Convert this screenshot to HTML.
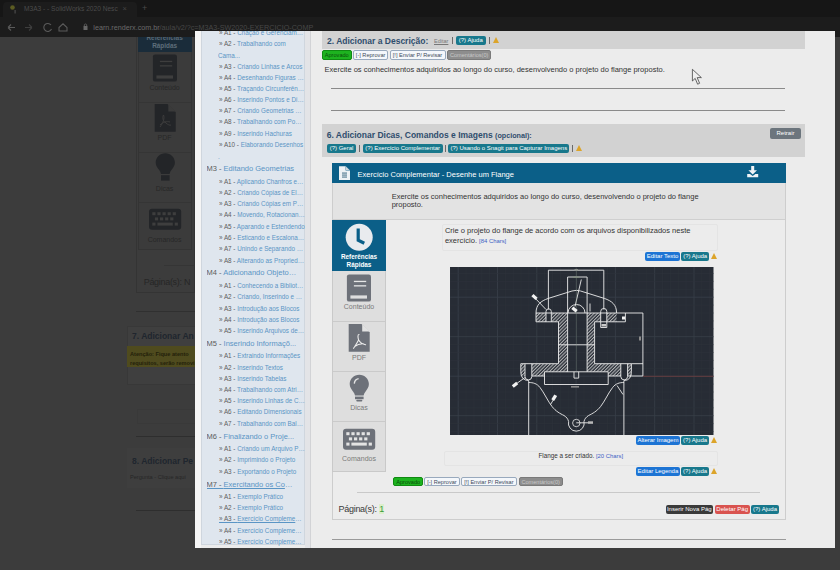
<!DOCTYPE html>
<html><head><meta charset="utf-8">
<style>
*{box-sizing:border-box;margin:0;padding:0}
html,body{width:840px;height:570px;overflow:hidden;background:#3c3c3c;font-family:"Liberation Sans",sans-serif;position:relative}
.a{position:absolute}
.t{position:absolute;white-space:nowrap;line-height:1}
#tabs{left:0;top:0;width:840px;height:17px;background:#161616}
#tool{left:0;top:17px;width:840px;height:20px;background:#1c1c1c}
#clip{position:absolute;left:0;top:0;width:840px;height:570px;clip-path:inset(31px 5px 22px 195px)}
#modalbg{left:195px;top:31px;width:640px;height:517px;background:#ececec}
.btn{position:absolute;height:9px;border-radius:2px;color:#fff;font-size:6px;line-height:9px;text-align:center;white-space:nowrap;font-weight:normal;overflow:hidden}
.teal{background:#18788c}
.blue{background:#1d74d4}
.hdr{position:absolute;background:#d2d2d2}
.li,.lc,.lm{position:absolute;white-space:nowrap;line-height:1;overflow:hidden;text-overflow:ellipsis;color:#5a95c5;padding-bottom:2px}
.li{left:219px;width:86px;font-size:6.3px}
.lc{left:218px;font-size:6.3px}
.lm{left:206.5px;width:90px;font-size:7.5px}
.li b,.lm b{font-weight:normal;color:#5c5c5c}
.u{text-decoration:underline}
.sep{position:absolute;width:1px;height:7px;background:#6a6a6a}
.tri{position:absolute;width:0;height:0;border-left:3.5px solid transparent;border-right:3.5px solid transparent;border-bottom:6.5px solid #dca42a}
.ob{position:absolute;height:9px;border-radius:2px;font-size:5.6px;line-height:8.2px;white-space:nowrap;text-align:center;overflow:hidden}
.ap{background:#1db31f;border:1px solid #108a12;color:#0a4d0b}
.rp{background:#f4f7fb;border:1px solid #98a9bd;color:#3d4a5a}
.cm{background:#8d8d8d;border:1px solid #7a7a7a;color:#c9c9c9}
.sb{position:absolute;left:332px;width:54px;background:#dedede;border-right:1px solid #c8c8c8;border-left:1px solid #c8c8c8}
.sbl{position:absolute;width:54px;text-align:center;font-size:7px;color:#7a7a7a;line-height:1}
</style></head><body>
<div id="tabs" class="a"></div>
<div id="tool" class="a"></div>
<!-- chrome details -->
<div class="a" style="left:3px;top:2px;width:134px;height:15px;background:#1c1c1c;border-radius:4px 4px 0 0"></div>
<svg class="a" style="left:9px;top:4px" width="9" height="10" viewBox="0 0 9 10"><circle cx="3.5" cy="3.5" r="2.3" fill="#5c5c22"/><rect x="5.5" y="6" width="1.2" height="3.5" fill="#4a4a4a"/></svg>
<div class="t" style="left:24px;top:6px;font-size:6.6px;color:#4b4b4b">M3A3 - - SolidWorks 2020 Nesc</div>
<div class="t" style="left:122.5px;top:5px;font-size:7.5px;color:#444">×</div>
<div class="t" style="left:142px;top:4px;font-size:9px;color:#4a4a4a">+</div>
<svg class="a" style="left:0;top:17px" width="200" height="20" viewBox="0 0 200 20">
<g stroke="#5a5a5a" stroke-width="1.1" fill="none">
<path d="M8,10.5 H15 M8,10.5 L11,7.5 M8,10.5 L11,13.5"/>
<path d="M32,10.5 H25 M32,10.5 L29,7.5 M32,10.5 L29,13.5" stroke="#3e3e3e"/>
<path d="M51,8 A4,4 0 1 0 51.5,12"/>
<path d="M59,10.5 L63,6.8 L67,10.5 V14 H59 Z"/>
</g>
<rect x="83.5" y="9" width="4" height="4" fill="#666"/>
<path d="M84.3,9 V7.8 A1.3,1.3 0 0 1 86.7,7.8 V9" stroke="#666" stroke-width="0.8" fill="none"/>
</svg>
<div class="t" style="left:93.3px;top:23.7px;font-size:7.2px;color:#6a6a6a">learn.renderx.com.br<span style="color:#474747">/aula/v2/?c=M3A3-SW2020-EXERCICIO-COMP</span></div>
<!-- dimmed page -->
<div class="a" style="left:137.6px;top:37px;width:54px;height:15.2px;background:#1a2c3a;overflow:hidden"><div class="t" style="left:0;top:-2.5px;width:54px;text-align:center;font-size:6.4px;font-weight:bold;color:#5a6a76">Referências</div></div>
<div class="t" style="left:137.6px;top:43px;width:54px;text-align:center;font-size:6.4px;font-weight:bold;color:#5e6e7a">Rápidas</div>
<div class="a" style="left:137.6px;top:52.2px;width:54px;height:198px;border:1px solid #343434;border-top:none;background:#3b3b3b"></div>
<div class="a" style="left:138.6px;top:101.5px;width:52px;height:1px;background:#353535"></div>
<div class="a" style="left:138.6px;top:151.5px;width:52px;height:1px;background:#353535"></div>
<div class="a" style="left:138.6px;top:201.5px;width:52px;height:1px;background:#353535"></div>
<div class="a" style="left:136.4px;top:37px;width:1px;height:255px;background:#343434"></div>
<div class="a" style="left:136.4px;top:291.6px;width:60px;height:1px;background:#343434"></div>
<div class="a" style="left:194px;top:37px;width:1px;height:255px;background:#343434"></div>
<svg class="a" style="left:137.6px;top:52px" width="54" height="200" viewBox="332 272 54 200">
<g fill="#232528">
<rect x="346.9" y="274.4" width="24.1" height="27.2" rx="2.2"/>
<path d="M348.7,324.1 H361.5 L369.7,332.3 V351.7 H348.7 Z"/>
<path d="M359.3,373.2 C364.6,373.2 368.9,377.3 368.9,382.5 C368.9,385.7 367.2,387.8 365.6,389.8 C364.5,391.2 363.8,392.6 363.6,394 H355 C354.8,392.6 354.1,391.2 353,389.8 C351.4,387.8 349.7,385.7 349.7,382.5 C349.7,377.3 354,373.2 359.3,373.2 Z"/>
<rect x="355" y="395.2" width="8.6" height="5.4"/>
<rect x="343" y="428.7" width="32.2" height="21" rx="3"/>
</g>
<path d="M362.3,324.1 L369.7,331.5 H362.3 Z" fill="#3a3a3a"/><path d="M357.5,335 C356,338 357,341 360,343 C362,345 364,345.5 365,345 M357.5,335 C359,338 357,343 354,347 M354,345 C357,342 361,341 364,342" stroke="#3c3c3c" stroke-width="1" fill="none"/>
<g fill="#3e3e3e">
<rect x="353.9" y="280.8" width="12.3" height="1.3"/><rect x="353.9" y="285.2" width="12.3" height="1.3"/><rect x="350.4" y="295.4" width="16.6" height="3.2"/>
<rect x="346.3" y="432.2" width="3.2" height="3"/><rect x="351.4" y="432.2" width="3.2" height="3"/><rect x="356.5" y="432.2" width="3.2" height="3"/><rect x="361.6" y="432.2" width="3.2" height="3"/><rect x="366.7" y="432.2" width="3.2" height="3"/>
<rect x="348.9" y="437.4" width="3.2" height="3"/><rect x="354" y="437.4" width="3.2" height="3"/><rect x="359.1" y="437.4" width="3.2" height="3"/><rect x="364.2" y="437.4" width="3.2" height="3"/>
<rect x="346.3" y="442.6" width="3.2" height="3"/><rect x="351.4" y="442.6" width="15.4" height="3"/><rect x="368.7" y="442.6" width="3.2" height="3"/>
</g>
</svg>
<div class="sbl" style="left:137.6px;top:83.8px;color:#272727">Conteúdo</div>
<div class="sbl" style="left:137.6px;top:134.3px;color:#272727">PDF</div>
<div class="sbl" style="left:137.6px;top:184.8px;color:#272727">Dicas</div>
<div class="sbl" style="left:137.6px;top:235.8px;color:#272727">Comandos</div>
<div class="a" style="left:164px;top:264.6px;width:31px;height:1px;background:#353535"></div>
<div class="t" style="left:143.7px;top:278px;font-size:9px;letter-spacing:-0.3px;color:#262626">Página(s): N</div>
<div class="a" style="left:136px;top:311px;width:60px;height:1px;background:#303030"></div>
<div class="a" style="left:127.4px;top:325.5px;width:70px;height:59.5px;background:#3f3f3f;border:1px solid #383838"></div>
<div class="t" style="left:132px;top:332px;font-size:8.5px;font-weight:bold;color:#20262e">7. Adicionar An</div>
<div class="a" style="left:127.4px;top:346.4px;width:70px;height:21px;background:#4f4b1e"></div>
<div class="t" style="left:130px;top:349.5px;font-size:5.6px;color:#23210a;font-weight:bold;line-height:9.5px">Atenção: Fique atento<br>requisitos, serão removi</div>
<div class="a" style="left:137px;top:408.8px;width:60px;height:15px;border:1px solid #393939"></div>
<div class="a" style="left:135.8px;top:436px;width:60px;height:1px;background:#2e2e2e"></div>
<div class="a" style="left:127.4px;top:448px;width:70px;height:40px;background:#3e3e3e"></div>
<div class="t" style="left:132px;top:457px;font-size:8.5px;font-weight:bold;color:#20262e">8. Adicionar Pe</div>
<div class="t" style="left:130px;top:475px;font-size:5.6px;color:#262626">Pergunta - Clique aqui</div>
<div class="a" style="left:135.8px;top:510px;width:60px;height:1px;background:#2e2e2e"></div>

<div id="clip">
<div id="modalbg" class="a"></div>
<!-- list panel -->
<div class="a" style="left:195px;top:31px;width:6px;height:517px;background:#f5f5f5"></div>
<div class="a" style="left:201px;top:20px;width:104px;height:525px;background:#dfe6ee;border:1px solid #cfd6de"></div>
<div class="a" style="left:305px;top:31px;width:6px;height:517px;background:#e3e4e7;border-right:1px solid #d2d3d6"></div>
<div class="li" style="top:30.1px"><b>» A1 - </b>Criação e Gerenciamento de Arquivos</div>
<div class="li" style="top:41.3px"><b>» A2 - </b>Trabalhando com</div>
<div class="lc" style="top:52.5px">Cama...</div>
<div class="li" style="top:63.6px"><b>» A3 - </b>Criando Linhas e Arcos</div>
<div class="li" style="top:74.8px"><b>» A4 - </b>Desenhando Figuras Planas</div>
<div class="li" style="top:85.8px"><b>» A5 - </b>Traçando Circunferências</div>
<div class="li" style="top:97.0px"><b>» A6 - </b>Inserindo Pontos e Divisões</div>
<div class="li" style="top:108.2px"><b>» A7 - </b>Criando Geometrias de Apoio</div>
<div class="li" style="top:119.3px"><b>» A8 - </b>Trabalhando com Pontos</div>
<div class="li" style="top:130.5px"><b>» A9 - </b>Inserindo Hachuras</div>
<div class="li" style="top:141.7px"><b>» A10 - </b>Elaborando Desenhos</div>
<div class="lc" style="top:154.3px">.</div>
<div class="lm" style="top:165.4px"><b>M3 - </b>Editando Geometrias</div>
<div class="li" style="top:179.0px"><b>» A1 - </b>Aplicando Chanfros e Concordâncias</div>
<div class="li" style="top:190.0px"><b>» A2 - </b>Criando Cópias de Elementos</div>
<div class="li" style="top:201.1px"><b>» A3 - </b>Criando Cópias em Padrão</div>
<div class="li" style="top:212.3px"><b>» A4 - </b>Movendo, Rotacionando</div>
<div class="li" style="top:223.5px"><b>» A5 - </b>Aparando e Estendendo</div>
<div class="li" style="top:234.9px"><b>» A6 - </b>Esticando e Escalonando</div>
<div class="li" style="top:246.2px"><b>» A7 - </b>Unindo e Separando Objetos</div>
<div class="li" style="top:257.7px"><b>» A8 - </b>Alterando as Propriedades</div>
<div class="lm" style="top:269.3px"><b>M4 - </b>Adicionando Objetos...</div>
<div class="li" style="top:282.6px"><b>» A1 - </b>Conhecendo a Biblioteca</div>
<div class="li" style="top:294.1px"><b>» A2 - </b>Criando, Inserindo e Editando</div>
<div class="li" style="top:305.8px"><b>» A3 - </b>Introdução aos Blocos</div>
<div class="li" style="top:316.9px"><b>» A4 - </b>Introdução aos Blocos</div>
<div class="li" style="top:328.1px"><b>» A5 - </b>Inserindo Arquivos de Referência</div>
<div class="lm" style="top:339.9px"><b>M5 - </b>Inserindo Informaçõ...</div>
<div class="li" style="top:353.2px"><b>» A1 - </b>Extraindo Informações</div>
<div class="li" style="top:364.6px"><b>» A2 - </b>Inserindo Textos</div>
<div class="li" style="top:375.9px"><b>» A3 - </b>Inserindo Tabelas</div>
<div class="li" style="top:387.2px"><b>» A4 - </b>Trabalhando com Atributos</div>
<div class="li" style="top:398.2px"><b>» A5 - </b>Inserindo Linhas de Chamada</div>
<div class="li" style="top:409.4px"><b>» A6 - </b>Editando Dimensionais</div>
<div class="li" style="top:421.1px"><b>» A7 - </b>Trabalhando com Balões</div>
<div class="lm" style="top:432.8px"><b>M6 - </b>Finalizando o Proje...</div>
<div class="li" style="top:445.9px"><b>» A1 - </b>Criando um Arquivo PDF</div>
<div class="li" style="top:457.2px"><b>» A2 - </b>Imprimindo o Projeto</div>
<div class="li" style="top:468.6px"><b>» A3 - </b>Exportando o Projeto</div>
<div class="lm u" style="top:480.6px"><b>M7 - </b>Exercitando os Conh...</div>
<div class="li" style="top:493.9px"><b>» A1 - </b>Exemplo Prático</div>
<div class="li" style="top:505.1px"><b>» A2 - </b>Exemplo Prático</div>
<div class="li u" style="top:516.3px"><b>» A3 - </b>Exercício Complementar</div>
<div class="li" style="top:527.6px"><b>» A4 - </b>Exercício Complementar</div>
<div class="li" style="top:538.8px"><b>» A5 - </b>Exercício Complementar</div>
<!-- section 2 -->
<div class="hdr" style="left:322px;top:20px;width:483px;height:28.6px"></div>
<div class="t" style="left:327px;top:37px;font-size:8.5px;font-weight:bold;color:#2f4d6d">2. Adicionar a Descrição:</div>
<div class="t" style="left:434px;top:39px;font-size:5.5px;color:#777;text-decoration:underline">Editar</div>
<div class="sep" style="left:452px;top:37px"></div>
<div class="btn teal" style="left:456px;top:36px;width:29.5px">(?) Ajuda</div>
<div class="sep" style="left:489px;top:37px"></div>
<div class="tri" style="left:493px;top:37px"></div>
<div class="ob ap" style="left:322px;top:50.2px;height:9.4px;width:29.5px">Aprovado</div>
<div class="ob rp" style="left:353.3px;top:50.2px;height:9.4px;width:34.6px">[-] Reprovar</div>
<div class="ob rp" style="left:389.5px;top:50.2px;height:9.4px;width:56px">[!] Enviar P/ Revisar</div>
<div class="ob cm" style="left:447.4px;top:50.2px;height:9.4px;width:43.6px">Comentários(0)</div>
<div class="t" style="left:324.5px;top:65.5px;font-size:7.5px;color:#333">Exercite os conhecimentos adquiridos ao longo do curso, desenvolvendo o projeto do flange proposto.</div>
<div class="a" style="left:331px;top:88px;width:454px;height:1px;background:#8a8a8a"></div>
<div class="a" style="left:331px;top:110px;width:454px;height:1px;background:#8a8a8a"></div>
<!-- section 6 -->
<div class="hdr" style="left:322px;top:123.5px;width:483px;height:33.5px"></div>
<div class="t" style="left:326.7px;top:131.2px;font-size:8.5px;font-weight:bold;color:#2f4d6d">6. Adicionar Dicas, Comandos e Imagens <span style="font-size:7.2px">(opcional):</span></div>
<div class="btn" style="left:770px;top:127.5px;width:31px;height:11px;line-height:11px;background:#6c757d;border-radius:2px">Retrair</div>
<div class="btn teal" style="left:327px;top:144.1px;width:29px;height:8.6px;line-height:8.6px">(?) Geral</div>
<div class="sep" style="left:359px;top:145px"></div>
<div class="btn teal" style="left:362.7px;top:144.1px;width:80px;height:8.6px;line-height:8.6px">(?) Exercício Complementar</div>
<div class="sep" style="left:445px;top:145px"></div>
<div class="btn teal" style="left:448.3px;top:144.1px;width:121px;height:8.6px;line-height:8.6px">(?) Usando o Snagit para Capturar Imagens</div>
<div class="sep" style="left:572px;top:145px"></div>
<div class="tri" style="left:575.5px;top:145px"></div>
<!-- card -->
<div class="a" style="left:332px;top:163px;width:454px;height:357px;border:1px solid #cdcdcd;background:#ececec"></div>
<div class="a" style="left:332px;top:163px;width:454px;height:20px;background:#0b5f88"></div>
<div class="t" style="left:357.6px;top:170.5px;font-size:7.5px;color:#fff">Exercício Complementar - Desenhe um Flange</div>
<div class="a" style="left:333px;top:183px;width:452px;height:37px;background:#e3e3e3;border-bottom:1px solid #cfcfcf"></div>
<div class="t" style="left:391.7px;top:192.8px;font-size:7.5px;color:#333;line-height:8px;white-space:normal;width:320px">Exercite os conhecimentos adquiridos ao longo do curso, desenvolvendo o projeto do flange proposto.</div>
<!-- sidebar -->
<div class="a" style="left:332px;top:220px;width:54px;height:51px;background:#0b5f88"></div>
<div class="a" style="left:332px;top:271px;width:54px;height:201px;background:#dedede;border:1px solid #c9c9c9;border-top:none"></div>
<div class="a" style="left:333px;top:321px;width:52px;height:1px;background:#cacaca"></div>
<div class="a" style="left:333px;top:371px;width:52px;height:1px;background:#cacaca"></div>
<div class="a" style="left:333px;top:421px;width:52px;height:1px;background:#cacaca"></div>
<div class="sbl" style="left:332px;top:252.5px;color:#fff;font-weight:bold;font-size:6.4px;line-height:8px">Referências<br>Rápidas</div>
<div class="sbl" style="left:332px;top:303px">Conteúdo</div>
<div class="sbl" style="left:332px;top:353.5px">PDF</div>
<div class="sbl" style="left:332px;top:404px">Dicas</div>
<div class="sbl" style="left:332px;top:455px">Comandos</div>
<svg class="a" style="left:332px;top:160px" width="460" height="300" viewBox="332 160 460 300">
<!-- doc icon in blue bar -->
<path d="M339,166.2 H345.6 L350,170.6 V180 H339 Z" fill="#eef2f5"/>
<path d="M345.6,166.2 V170.6 H350 Z" fill="#0b5f88"/>
<path d="M345.9,166.5 L349.7,170.3 H345.9 Z" fill="#cfd8de"/>
<rect x="342" y="172.6" width="5" height="0.9" fill="#2d5e78"/>
<rect x="342" y="174.6" width="5" height="0.9" fill="#2d5e78"/>
<rect x="342" y="176.6" width="5" height="0.9" fill="#2d5e78"/>
<!-- download icon -->
<path d="M751.2,166 H754.2 V170.2 H757 L752.7,174.4 L748.4,170.2 H751.2 Z" fill="#f0f4f7"/>
<path d="M747.2,174 H750 L752.7,176 L755.4,174 H758.2 V177.2 H747.2 Z" fill="#f0f4f7"/>
<!-- clock -->
<circle cx="359.2" cy="237.3" r="13.5" fill="#e9ebee"/>
<path d="M358.2,228.5 V240.2 L364.3,243.2" stroke="#0b5f88" stroke-width="3.2" fill="none" stroke-linejoin="miter" stroke-linecap="butt"/>
<!-- book -->
<rect x="346.9" y="274.4" width="24.1" height="27.2" rx="2.2" fill="#6d7179"/>
<rect x="353.9" y="280.8" width="12.3" height="1.3" fill="#e6e6e6"/>
<rect x="353.9" y="285.2" width="12.3" height="1.3" fill="#e6e6e6"/>
<rect x="350.4" y="295.4" width="16.6" height="3.2" fill="#dedede"/>
<!-- pdf -->
<path d="M348.7,324.1 H361.5 L369.7,332.3 V351.7 H348.7 Z" fill="#6d7179"/>
<path d="M362.2,324.3 L369.5,331.6 H362.2 Z" fill="#e2e2e2"/>
<path d="M359,334.5 C357.6,334.5 357.8,337.5 358.6,340 C357,343 355.5,345.5 353.6,348.3 M358.6,340 C360,342.5 362,344 365.6,344.8 M354.6,346.6 C357,344.6 360,343.6 363.4,343.8" stroke="#ececec" stroke-width="1.1" fill="none" stroke-linecap="round"/>
<!-- bulb -->
<g transform="translate(0,1.6)">
<path d="M359.3,373.2 C364.6,373.2 368.9,377.3 368.9,382.5 C368.9,385.7 367.2,387.8 365.6,389.8 C364.5,391.2 363.8,392.6 363.6,394 H355 C354.8,392.6 354.1,391.2 353,389.8 C351.4,387.8 349.7,385.7 349.7,382.5 C349.7,377.3 354,373.2 359.3,373.2 Z" fill="#6d7179"/>
<rect x="355" y="395" width="8.6" height="2.6" fill="#6d7179"/>
<rect x="356.3" y="398.2" width="6" height="1.8" rx="0.8" fill="#6d7179"/>
<path d="M354.3,382 C354.5,379.2 356.3,377.4 358.6,377" stroke="#e4e4e4" stroke-width="1.4" fill="none"/>
</g>
<!-- keyboard -->
<rect x="343" y="428.7" width="32.2" height="21" rx="3" fill="#6d7179"/>
<g fill="#e3e3e3">
<rect x="346.3" y="432.2" width="3.2" height="3"/><rect x="351.4" y="432.2" width="3.2" height="3"/><rect x="356.5" y="432.2" width="3.2" height="3"/><rect x="361.6" y="432.2" width="3.2" height="3"/><rect x="366.7" y="432.2" width="3.2" height="3"/>
<rect x="348.9" y="437.4" width="3.2" height="3"/><rect x="354" y="437.4" width="3.2" height="3"/><rect x="359.1" y="437.4" width="3.2" height="3"/><rect x="364.2" y="437.4" width="3.2" height="3"/>
<rect x="346.3" y="442.6" width="3.2" height="3"/><rect x="351.4" y="442.6" width="15.4" height="3"/><rect x="368.7" y="442.6" width="3.2" height="3"/>
</g>
</svg>

<!-- content -->
<div class="a" style="left:442px;top:224px;width:276px;height:27px;border:1px solid #e4e4e4;border-radius:2px"></div>
<div class="t" style="left:444.9px;top:226.3px;font-size:7.5px;color:#333;line-height:9.5px">Crie o projeto do flange de acordo com os arquivos disponibilizados neste<br>exercício. <span style="font-size:5.9px;color:#3d5fc4">[84 Chars]</span></div>
<div class="btn blue" style="left:645px;top:251.5px;width:35px">Editar Texto</div>
<div class="btn teal" style="left:681.4px;top:251.5px;width:27.6px">(?) Ajuda</div>
<div class="tri" style="left:710.5px;top:252.5px"></div>
<svg class="a" style="left:450px;top:266.5px" width="263.5" height="168.5" viewBox="450 266.5 263.5 168.5">
<defs><pattern id="hp" width="2.4" height="2.4" patternUnits="userSpaceOnUse" patternTransform="rotate(45)"><line x1="0.6" y1="0" x2="0.6" y2="2.4" stroke="#e0e0e0" stroke-width="0.8"/></pattern></defs>
<rect x="450" y="266.5" width="263.5" height="168.5" fill="#272c35"/>
<line x1="450.34" y1="266.5" x2="450.34" y2="435.0" stroke="#2d333b" stroke-width="0.6"/>
<line x1="458.20" y1="266.5" x2="458.20" y2="435.0" stroke="#383e48" stroke-width="0.85"/>
<line x1="466.06" y1="266.5" x2="466.06" y2="435.0" stroke="#2d333b" stroke-width="0.6"/>
<line x1="473.92" y1="266.5" x2="473.92" y2="435.0" stroke="#2d333b" stroke-width="0.6"/>
<line x1="481.78" y1="266.5" x2="481.78" y2="435.0" stroke="#2d333b" stroke-width="0.6"/>
<line x1="489.64" y1="266.5" x2="489.64" y2="435.0" stroke="#2d333b" stroke-width="0.6"/>
<line x1="497.50" y1="266.5" x2="497.50" y2="435.0" stroke="#383e48" stroke-width="0.85"/>
<line x1="505.36" y1="266.5" x2="505.36" y2="435.0" stroke="#2d333b" stroke-width="0.6"/>
<line x1="513.22" y1="266.5" x2="513.22" y2="435.0" stroke="#2d333b" stroke-width="0.6"/>
<line x1="521.08" y1="266.5" x2="521.08" y2="435.0" stroke="#2d333b" stroke-width="0.6"/>
<line x1="528.94" y1="266.5" x2="528.94" y2="435.0" stroke="#2d333b" stroke-width="0.6"/>
<line x1="536.80" y1="266.5" x2="536.80" y2="435.0" stroke="#383e48" stroke-width="0.85"/>
<line x1="544.66" y1="266.5" x2="544.66" y2="435.0" stroke="#2d333b" stroke-width="0.6"/>
<line x1="552.52" y1="266.5" x2="552.52" y2="435.0" stroke="#2d333b" stroke-width="0.6"/>
<line x1="560.38" y1="266.5" x2="560.38" y2="435.0" stroke="#2d333b" stroke-width="0.6"/>
<line x1="568.24" y1="266.5" x2="568.24" y2="435.0" stroke="#2d333b" stroke-width="0.6"/>
<line x1="576.10" y1="266.5" x2="576.10" y2="435.0" stroke="#383e48" stroke-width="0.85"/>
<line x1="583.96" y1="266.5" x2="583.96" y2="435.0" stroke="#2d333b" stroke-width="0.6"/>
<line x1="591.82" y1="266.5" x2="591.82" y2="435.0" stroke="#2d333b" stroke-width="0.6"/>
<line x1="599.68" y1="266.5" x2="599.68" y2="435.0" stroke="#2d333b" stroke-width="0.6"/>
<line x1="607.54" y1="266.5" x2="607.54" y2="435.0" stroke="#2d333b" stroke-width="0.6"/>
<line x1="615.40" y1="266.5" x2="615.40" y2="435.0" stroke="#383e48" stroke-width="0.85"/>
<line x1="623.26" y1="266.5" x2="623.26" y2="435.0" stroke="#2d333b" stroke-width="0.6"/>
<line x1="631.12" y1="266.5" x2="631.12" y2="435.0" stroke="#2d333b" stroke-width="0.6"/>
<line x1="638.98" y1="266.5" x2="638.98" y2="435.0" stroke="#2d333b" stroke-width="0.6"/>
<line x1="646.84" y1="266.5" x2="646.84" y2="435.0" stroke="#2d333b" stroke-width="0.6"/>
<line x1="654.70" y1="266.5" x2="654.70" y2="435.0" stroke="#383e48" stroke-width="0.85"/>
<line x1="662.56" y1="266.5" x2="662.56" y2="435.0" stroke="#2d333b" stroke-width="0.6"/>
<line x1="670.42" y1="266.5" x2="670.42" y2="435.0" stroke="#2d333b" stroke-width="0.6"/>
<line x1="678.28" y1="266.5" x2="678.28" y2="435.0" stroke="#2d333b" stroke-width="0.6"/>
<line x1="686.14" y1="266.5" x2="686.14" y2="435.0" stroke="#2d333b" stroke-width="0.6"/>
<line x1="694.00" y1="266.5" x2="694.00" y2="435.0" stroke="#383e48" stroke-width="0.85"/>
<line x1="701.86" y1="266.5" x2="701.86" y2="435.0" stroke="#2d333b" stroke-width="0.6"/>
<line x1="709.72" y1="266.5" x2="709.72" y2="435.0" stroke="#2d333b" stroke-width="0.6"/>
<line x1="450" y1="273.00" x2="713.5" y2="273.00" stroke="#2d333b" stroke-width="0.6"/>
<line x1="450" y1="280.90" x2="713.5" y2="280.90" stroke="#2d333b" stroke-width="0.6"/>
<line x1="450" y1="288.80" x2="713.5" y2="288.80" stroke="#2d333b" stroke-width="0.6"/>
<line x1="450" y1="296.70" x2="713.5" y2="296.70" stroke="#383e48" stroke-width="0.85"/>
<line x1="450" y1="304.60" x2="713.5" y2="304.60" stroke="#2d333b" stroke-width="0.6"/>
<line x1="450" y1="312.50" x2="713.5" y2="312.50" stroke="#2d333b" stroke-width="0.6"/>
<line x1="450" y1="320.40" x2="713.5" y2="320.40" stroke="#2d333b" stroke-width="0.6"/>
<line x1="450" y1="328.30" x2="713.5" y2="328.30" stroke="#2d333b" stroke-width="0.6"/>
<line x1="450" y1="336.20" x2="713.5" y2="336.20" stroke="#383e48" stroke-width="0.85"/>
<line x1="450" y1="344.10" x2="713.5" y2="344.10" stroke="#2d333b" stroke-width="0.6"/>
<line x1="450" y1="352.00" x2="713.5" y2="352.00" stroke="#2d333b" stroke-width="0.6"/>
<line x1="450" y1="359.90" x2="713.5" y2="359.90" stroke="#2d333b" stroke-width="0.6"/>
<line x1="450" y1="367.80" x2="713.5" y2="367.80" stroke="#2d333b" stroke-width="0.6"/>
<line x1="450" y1="375.70" x2="713.5" y2="375.70" stroke="#383e48" stroke-width="0.85"/>
<line x1="450" y1="383.60" x2="713.5" y2="383.60" stroke="#2d333b" stroke-width="0.6"/>
<line x1="450" y1="391.50" x2="713.5" y2="391.50" stroke="#2d333b" stroke-width="0.6"/>
<line x1="450" y1="399.40" x2="713.5" y2="399.40" stroke="#2d333b" stroke-width="0.6"/>
<line x1="450" y1="407.30" x2="713.5" y2="407.30" stroke="#2d333b" stroke-width="0.6"/>
<line x1="450" y1="415.20" x2="713.5" y2="415.20" stroke="#383e48" stroke-width="0.85"/>
<line x1="450" y1="423.10" x2="713.5" y2="423.10" stroke="#2d333b" stroke-width="0.6"/>
<line x1="450" y1="431.00" x2="713.5" y2="431.00" stroke="#2d333b" stroke-width="0.6"/>
<path d="M536,312.5 H567.6 V371.3 H544.5 V375.5 H520.8 V363.2 H558.5 V321.3 H536 Z" fill="url(#hp)"/>
<path d="M587.1,312.5 H616.6 V321.3 H594.6 V363.2 H631.4 V375.5 H608.2 V371.3 H587.1 Z" fill="url(#hp)"/>
<path d="M546,321.3 V311 A2.65,2.65 0 0 1 551.3,311 V321.3 Z" fill="#272c35"/>
<path d="M600.7,321.3 V311 A3.05,3.05 0 0 1 606.8,311 V321.3 Z" fill="#272c35"/>
<path d="M525,363.2 V376 A3.4,3.4 0 0 0 531.8,376 V363.2 Z" fill="#272c35"/>
<path d="M620.8,363.2 V376 A3.4,3.4 0 0 0 627.6,376 V363.2 Z" fill="#272c35"/>
<path d="M548.4,309 V269.7 H603.8 V309" stroke="#ececec" stroke-width="0.9" fill="none"/>
<path d="M567.6,371.3 V276.5 H587.1 V371.3" stroke="#ececec" stroke-width="0.9" fill="none"/>
<path d="M558.5,321.3 V363.2 M594.6,321.3 V363.2" stroke="#ececec" stroke-width="0.9" fill="none"/>
<path d="M536,312.5 H642.9 V375.5 H627.6" stroke="#ececec" stroke-width="0.9" fill="none"/>
<path d="M536,312.5 V321.3 H558.5 M594.6,321.3 H625.4 V312.5" stroke="#ececec" stroke-width="0.9" fill="none"/>
<path d="M536,312.5 C536,304 541,300.5 548,298 L572,290.5 Q576.3,289.2 580.6,290.5 L604.6,298 C611.6,300.5 616.6,304 616.6,312.5" stroke="#ececec" stroke-width="0.9" fill="none"/>
<path d="M568,312.5 A8.5,8.5 0 0 1 585,312.5" stroke="#ececec" stroke-width="0.9" fill="none"/>
<path d="M546,321.3 V311 A2.65,2.65 0 0 1 551.3,311 V321.3" stroke="#ececec" stroke-width="0.9" fill="none"/>
<path d="M600.7,321.3 V311 A3.05,3.05 0 0 1 606.8,311 V327 H600.7 Z" stroke="#ececec" stroke-width="0.9" fill="none"/>
<path d="M520.8,363.2 H558.5 M594.6,363.2 H631.4" stroke="#ececec" stroke-width="0.9" fill="none"/>
<path d="M520.8,363.2 V371 Q520.8,380 528.7,380" stroke="#ececec" stroke-width="0.9" fill="none"/>
<path d="M631.4,363.2 V371 Q631.4,380 624,380" stroke="#ececec" stroke-width="0.9" fill="none"/>
<path d="M525,363.2 V376 A3.4,3.4 0 0 0 531.8,376 V363.2" stroke="#ececec" stroke-width="0.9" fill="none"/>
<path d="M620.8,363.2 V376 A3.4,3.4 0 0 0 627.6,376 V363.2" stroke="#ececec" stroke-width="0.9" fill="none"/>
<path d="M531.8,375.5 H544.5 M608.2,375.5 H620.8" stroke="#ececec" stroke-width="0.9" fill="none"/>
<path d="M544.5,371.3 H608.2 V384 H544.5 Z" stroke="#ececec" stroke-width="0.9" fill="none"/>
<path d="M574,371.3 V377.6 H578.7 V371.3" stroke="#ececec" stroke-width="0.9" fill="none"/>
<path d="M558.5,344.3 H594.6" stroke="#ececec" stroke-width="0.9" fill="none"/>
<path d="M631.4,363.2 H643" stroke="#ececec" stroke-width="0.9" fill="none"/>
<path d="M528.7,380 V435 M623.9,380 V435" stroke="#ececec" stroke-width="0.9" fill="none"/>
<path d="M528.7,382 C533,382 537,383 540,387 C544,392 548,401 552,406 C556,411 560,413 564,415 C566.5,416.5 568,418.5 568.6,421 A7.9,7.9 0 1 0 584,421 C584.6,418.5 586.1,416.5 588.6,415 C592.6,413 596.6,411 600.6,406 C604.6,401 608.6,392 612.6,387 C615.6,383 619.6,382 623.9,382" stroke="#ececec" stroke-width="0.9" fill="none"/>
<path d="M534.5,297 L546,309" stroke="#ececec" stroke-width="0.9" fill="none"/>
<path d="M581.3,279 L575,306" stroke="#ececec" stroke-width="0.9" fill="none"/>
<path d="M516,383.5 L525,377" stroke="#ececec" stroke-width="0.9" fill="none"/>
<path d="M550.5,404 L556,395" stroke="#ececec" stroke-width="0.9" fill="none"/>
<path d="M617,385 L623,394" stroke="#ececec" stroke-width="0.9" fill="none"/>
<path d="M576.3,422.3 H593" stroke="#ececec" stroke-width="0.9" fill="none"/>
<path d="M590,303 V311" stroke="#ececec" stroke-width="0.9" fill="none"/>
<circle cx="576.3" cy="422.5" r="3.7" stroke="#e2e2e2" stroke-width="0.85" fill="none"/>
<line x1="576.3" y1="268" x2="576.3" y2="371" stroke="#7d8f7d" stroke-width="0.6" opacity="0.6"/>
<line x1="643" y1="375.8" x2="713.5" y2="375.8" stroke="#7a3d3d" stroke-width="0.7"/>
<rect x="531.7" y="294.9" width="5.6" height="3.2" fill="#f2f2f2" transform="rotate(42 534.5 296.5)"/>
<rect x="571.7" y="307.4" width="5.6" height="3.2" fill="#f2f2f2" transform="rotate(40 574.5 309)"/>
<rect x="512.2" y="382.7" width="5.6" height="3.2" fill="#f2f2f2" transform="rotate(-38 515 384.3)"/>
<rect x="551.4000000000001" y="395.7" width="5.6" height="3.2" fill="#f2f2f2" transform="rotate(-58 554.2 397.3)"/>
<rect x="574.5" y="268.5" width="3.5" height="1.5" fill="#8a8f8a"/><rect x="622" y="316" width="3" height="3" fill="#f0f0f0"/><rect x="601.5" y="323.5" width="4.5" height="2.5" fill="#c8c8c8"/>
<rect x="573" y="276" width="6" height="1.5" fill="#7f8a7f"/>
<rect x="639" y="336" width="2" height="4" fill="#8a8a8a"/>
<rect x="588" y="420.8" width="5" height="2.4" fill="#b8b8b8"/>
<rect x="571" y="385.5" width="8" height="1.6" fill="#8a8a8a"/>
</svg>
<div class="btn blue" style="left:636px;top:436.2px;width:43.8px">Alterar Imagem</div>
<div class="btn teal" style="left:681.4px;top:436.2px;width:27.4px">(?) Ajuda</div>
<div class="tri" style="left:710.5px;top:437px"></div>
<div class="a" style="left:443.5px;top:450.8px;width:274px;height:15.5px;border:1px solid #e4e4e4;border-radius:2px"></div>
<div class="t" style="left:538.5px;top:452.5px;font-size:6.3px;color:#333">Flange a ser criado. <span style="font-size:5.9px;color:#3d5fc4">[20 Chars]</span></div>
<div class="btn blue" style="left:636px;top:466.8px;width:43.8px">Editar Legenda</div>
<div class="btn teal" style="left:681.4px;top:466.8px;width:27.4px">(?) Ajuda</div>
<div class="tri" style="left:710.5px;top:467.5px"></div>
<div class="ob ap" style="left:393px;top:477.2px;width:30.3px">Aprovado</div>
<div class="ob rp" style="left:424.3px;top:477.2px;width:35.3px">[-] Reprovar</div>
<div class="ob rp" style="left:461px;top:477.2px;width:55.8px">[!] Enviar P/ Revisar</div>
<div class="ob cm" style="left:518.7px;top:477.2px;width:44px">Comentários(0)</div>
<div class="a" style="left:357px;top:492px;width:403px;height:1px;background:#c9c9c9"></div>
<div class="t" style="left:338.6px;top:505px;font-size:9px;letter-spacing:-0.3px;color:#3a3a3a">Página(s):<span style="color:#3b9b3b;background:#dcefcc;margin-left:2.5px">1</span></div>
<div class="btn" style="left:666px;top:505.2px;width:46.5px;background:#3a3a3a">Inserir Nova Pág</div>
<div class="btn" style="left:714.7px;top:505.2px;width:35px;background:#d9534f">Deletar Pág</div>
<div class="btn teal" style="left:751.2px;top:505.2px;width:27.6px">(?) Ajuda</div>
<div class="a" style="left:331.5px;top:538.5px;width:454px;height:1px;background:#9a9a9a"></div>
<!-- cursor -->
<svg class="a" style="left:680px;top:60px" width="30" height="30" viewBox="680 60 30 30"><path d="M692.4,69.3 V81 L695.2,78.4 L697.6,84.2 L699.6,83.3 L697.2,77.6 L701.4,77.6 Z" fill="#efefef" stroke="#3a3a3a" stroke-width="0.75" stroke-linejoin="round"/></svg>

</div>
</body></html>
